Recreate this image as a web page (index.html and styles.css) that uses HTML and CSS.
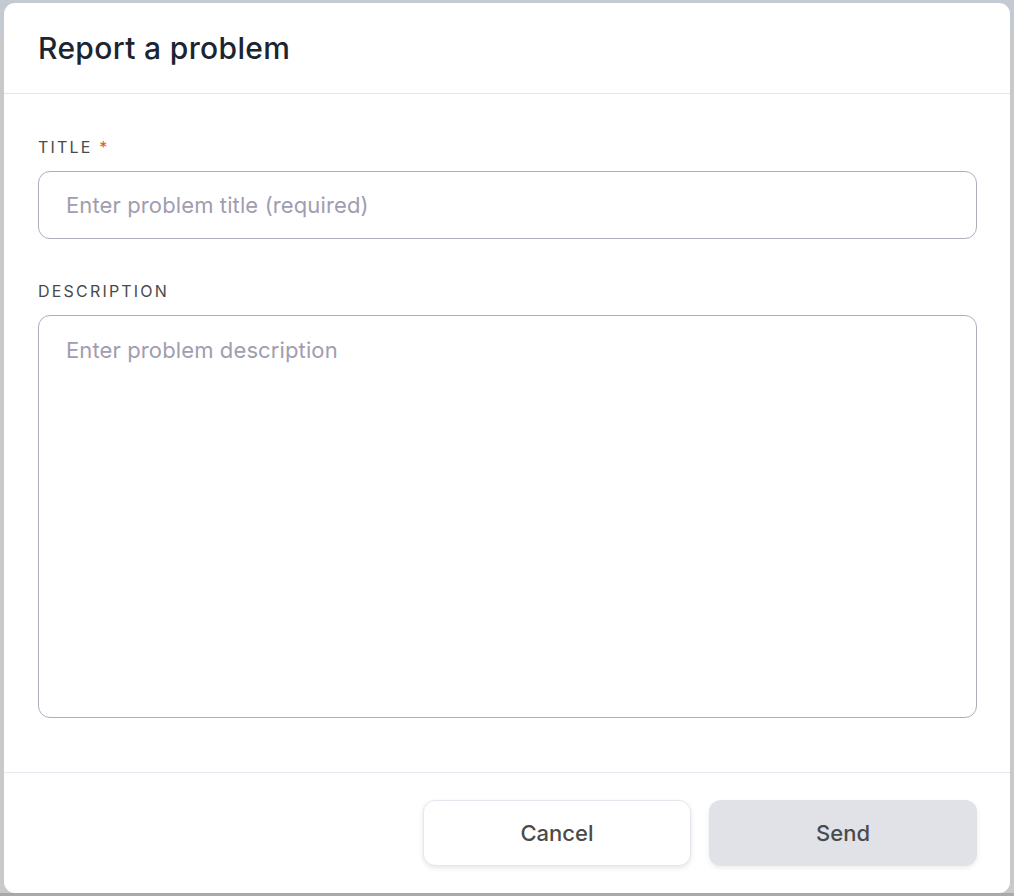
FILE: index.html
```html
<!DOCTYPE html>
<html lang="en">
<head>
<meta charset="utf-8">
<title>Report a problem</title>
<link rel="stylesheet" href="styles.css">
</head>
<body>
<div class="backdrop">
  <div class="modal">
    <div class="modal-header">
      <h1 class="modal-title">Report a problem</h1>
    </div>
    <div class="modal-body">
      <div class="field">
        <label class="field-label">Title <span class="req">*</span></label>
        <input class="text-input" type="text" placeholder="Enter problem title (required)">
      </div>
      <div class="field">
        <label class="field-label">Description</label>
        <textarea class="text-area" placeholder="Enter problem description"></textarea>
      </div>
    </div>
    <div class="modal-footer">
      <button class="btn btn-cancel">Cancel</button>
      <button class="btn btn-send">Send</button>
    </div>
  </div>
</div>
</body>
</html>
```
FILE: styles.css
```css
* { box-sizing: border-box; }
html, body { margin: 0; padding: 0; }
body {
  font-family: Inter, "Noto Sans", "Liberation Sans", sans-serif;
  background: linear-gradient(to bottom, #c4cad2 0, #c4cad2 38px, #c9c9c9 38px, #c9c9c9 893px, #a9a9a9 893px);
  width: 1014px;
  height: 896px;
  overflow: hidden;
}
.backdrop {
  padding: 3px 4px 3px 4px;
}
.modal {
  background: #ffffff;
  border-radius: 11px;
  height: 890px;
  display: flex;
  flex-direction: column;
}
.modal-header {
  height: 91px;
  border-bottom: 1px solid #e4e5ea;
  display: flex;
  align-items: center;
  padding: 0 34px 0 34px;
}
.modal-title {
  margin: 0;
  font-size: 30px;
  font-weight: 500;
  color: #1b2431;
  letter-spacing: 0.35px;
  padding-bottom: 1px;
}
.modal-body {
  flex: 1;
  padding: 43px 33px 0 34px;
  display: flex;
  flex-direction: column;
  gap: 42px;
}
.field {
  display: flex;
  flex-direction: column;
}
.field-label {
  font-size: 16px;
  line-height: 20px;
  letter-spacing: 2.2px;
  text-transform: uppercase;
  color: #4a4a4a;
  margin-bottom: 14px;
}
.req { color: #e0572a; }
.text-input, .text-area {
  width: 100%;
  border: 1px solid #aeadbe;
  border-radius: 12px;
  font-family: inherit;
  font-size: 22px;
  letter-spacing: 0.12px;
  color: #333;
  padding: 0 27px;
  background: #fff;
  outline: none;
}
.text-input { height: 68px; }
.text-area {
  height: 403px;
  padding-top: 19px;
  resize: none;
  line-height: 30px;
}
.text-input::placeholder, .text-area::placeholder { color: #9f9db0; }
.modal-footer {
  border-top: 1px solid #e6e6ee;
  height: 121px;
  display: flex;
  justify-content: flex-end;
  align-items: center;
  gap: 18px;
  padding: 0 33px 0 34px;
}
.btn {
  width: 268px;
  height: 66px;
  border-radius: 12px;
  font-family: inherit;
  font-size: 22px;
  font-weight: 500;
  color: #4b4b4b;
  cursor: pointer;
}
.btn-cancel {
  background: #ffffff;
  border: 1px solid #e6e6ee;
  box-shadow: 0 2px 5px rgba(0,0,0,0.10);
}
.btn-send {
  background: #e0e2e8;
  border: none;
  box-shadow: 0 2px 5px rgba(0,0,0,0.08);
}
```
